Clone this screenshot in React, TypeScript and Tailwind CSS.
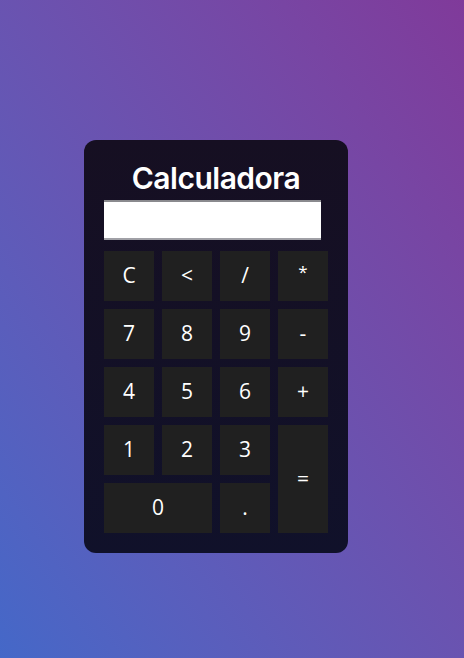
import React, { useState } from 'react';

const keys: { label: string; cls?: string }[] = [
    { label: 'C' }, { label: '<' }, { label: '/' }, { label: '*' },
    { label: '7' }, { label: '8' }, { label: '9' }, { label: '-' },
    { label: '4' }, { label: '5' }, { label: '6' }, { label: '+' },
    { label: '1' }, { label: '2' }, { label: '3' }, { label: '=', cls: 'row-span-2' },
    { label: '0', cls: 'col-span-2' }, { label: '.' },
];

const App: React.FC = () => {
    const [value, setValue] = useState('');

    const press = (k: string) => {
        if (k === 'C') return setValue('');
        if (k === '<') return setValue(v => v.slice(0, -1));
        if (k === '=') {
            try {
                // eslint-disable-next-line no-new-func
                setValue(String(Function(`return (${value})`)()));
            } catch {
                setValue('');
            }
            return;
        }
        setValue(v => v + k);
    };

    return (
        <div className="min-h-[658px] w-full bg-linear-to-tr from-[#4468c8] to-[#803a9a] pt-[140px] pl-[84px]">
            <div className="w-[264px] rounded-xl bg-linear-to-b from-[#160f22] to-[#10112a] px-5 pt-5 pb-5">
                <h1 className="h-9 mb-1 text-center text-[30px] leading-9 font-semibold text-white tracking-[-0.5px]" style={{ fontFamily: 'Inter, "Open Sans", sans-serif' }}>
                    Calculadora
                </h1>
                <input
                    type="text"
                    readOnly
                    value={value}
                    className="block w-[217px] h-10 bg-white border-y-2 border-t-[#8a8a8e] border-b-[#a0a0a6] px-2 text-right text-lg text-black outline-none"
                    style={{ fontFamily: '"Open Sans", sans-serif' }}
                />
                <div className="mt-[11px] grid grid-cols-[repeat(4,50px)] auto-rows-[50px] gap-2">
                    {keys.map(k => (
                        <button
                            key={k.label}
                            onClick={() => press(k.label)}
                            className={`bg-[#202020] text-white flex items-center justify-center cursor-pointer ${k.label === '*' ? 'text-[17px] pb-2' : 'text-[21px]'} ${k.cls ?? ''}`}
                            style={{ fontFamily: '"Open Sans", sans-serif' }}
                        >
                            {k.label}
                        </button>
                    ))}
                </div>
            </div>
        </div>
    );
};

export default App;
